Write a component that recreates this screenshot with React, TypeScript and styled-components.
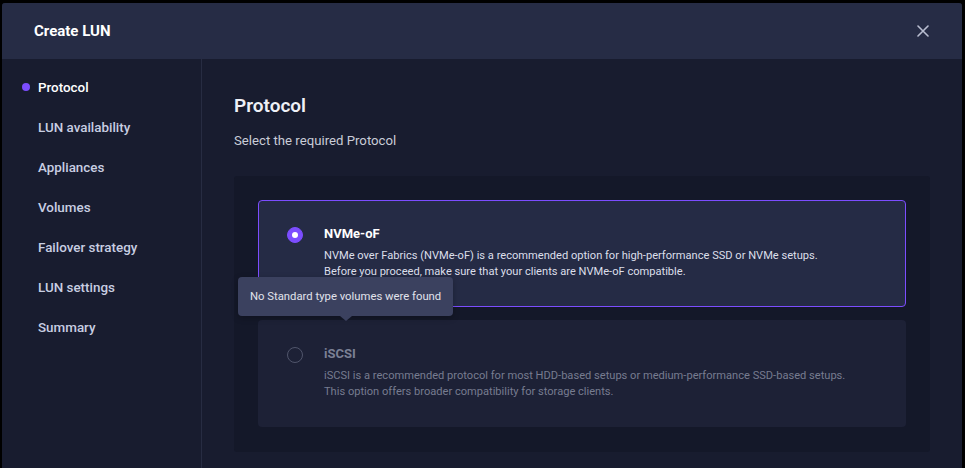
import React from 'react';
import styled, { createGlobalStyle } from 'styled-components';

const GlobalStyle = createGlobalStyle`
  html, body {
    margin: 0;
    padding: 0;
    background: #000;
  }
  body {
    font-family: Roboto, "Noto Sans", sans-serif;
    -webkit-font-smoothing: antialiased;
  }
  * { box-sizing: border-box; }
`;

const steps = [
  'Protocol',
  'LUN availability',
  'Appliances',
  'Volumes',
  'Failover strategy',
  'LUN settings',
  'Summary',
];

const protocols = [
  {
    id: 'nvme',
    title: 'NVMe-oF',
    lines: [
      'NVMe over Fabrics (NVMe-oF) is a recommended option for high-performance SSD or NVMe setups.',
      'Before you proceed, make sure that your clients are NVMe-oF compatible.',
    ],
    selected: true,
    disabled: false,
  },
  {
    id: 'iscsi',
    title: 'iSCSI',
    lines: [
      'iSCSI is a recommended protocol for most HDD-based setups or medium-performance SSD-based setups.',
      'This option offers broader compatibility for storage clients.',
    ],
    selected: false,
    disabled: true,
  },
];

const CreateLunDialog: React.FC = () => {
  return (
    <Dialog>
      <Header>
        <Title>Create LUN</Title>
        <CloseButton aria-label='Close'>
          <svg width='12' height='12' viewBox='0 0 12 12'>
            <path d='M1 1L11 11M11 1L1 11' stroke='#b9bed1' strokeWidth='1.6' strokeLinecap='round' />
          </svg>
        </CloseButton>
      </Header>
      <Body>
        <Sidebar>
          {steps.map((step, index) => (
            <StepItem key={step} active={index === 0}>
              <StepDot active={index === 0} />
              {step}
            </StepItem>
          ))}
        </Sidebar>
        <Main>
          <Heading>Protocol</Heading>
          <SubHeading>Select the required Protocol</SubHeading>
          <Panel>
            {protocols.map((p) => (
              <OptionCard key={p.id} selected={p.selected} disabled={p.disabled}>
                <Radio selected={p.selected} />
                <OptionText>
                  <OptionTitle disabled={p.disabled}>{p.title}</OptionTitle>
                  <OptionDesc disabled={p.disabled}>
                    {p.lines.map((line) => (
                      <div key={line}>{line}</div>
                    ))}
                  </OptionDesc>
                </OptionText>
              </OptionCard>
            ))}
            <Tooltip>No Standard type volumes were found</Tooltip>
          </Panel>
        </Main>
      </Body>
    </Dialog>
  );
};

const Dialog = styled.div`
  margin: 3px 0 0 2px;
  width: 960px;
  height: 465px;
  background: #181c2f;
  display: flex;
  flex-direction: column;
  border-radius: 3px 3px 0 0;
  overflow: hidden;
`;

const Header = styled.div`
  height: 56px;
  flex-shrink: 0;
  background: #262c45;
  display: flex;
  align-items: center;
  justify-content: space-between;
  padding: 0 33px 0 32px;
`;

const Title = styled.div`
  color: #ffffff;
  font-size: 15px;
  font-weight: 700;
`;

const CloseButton = styled.button`
  background: none;
  border: none;
  padding: 0;
  width: 12px;
  height: 12px;
  display: flex;
  cursor: pointer;
`;

const Body = styled.div`
  flex: 1;
  display: flex;
  min-height: 0;
`;

const Sidebar = styled.div`
  width: 200px;
  flex-shrink: 0;
  border-right: 1px solid #272c42;
  padding: 8px 0 0 20px;
  display: flex;
  flex-direction: column;
`;

const StepItem = styled.div<{ active: boolean }>`
  height: 40px;
  display: flex;
  align-items: center;
  gap: 8px;
  font-size: 13.4px;
  font-weight: 500;
  color: ${({ active }) => (active ? '#ffffff' : '#c8cee2')};
`;

const StepDot = styled.span<{ active: boolean }>`
  width: 8px;
  height: 8px;
  border-radius: 50%;
  flex-shrink: 0;
  background: ${({ active }) => (active ? '#7c4dff' : 'transparent')};
`;

const Main = styled.div`
  flex: 1;
  padding: 35px 32px 0 32px;
  display: flex;
  flex-direction: column;
`;

const Heading = styled.h2`
  margin: 0;
  font-size: 19px;
  font-weight: 600;
  line-height: 24px;
  color: #eef0f6;
`;

const SubHeading = styled.p`
  margin: 14px 0 0;
  font-size: 13.2px;
  line-height: 18px;
  color: #c9ccd8;
`;

const Panel = styled.div`
  position: relative;
  margin-top: 26px;
  background: #141829;
  border-radius: 3px;
  padding: 24px;
  display: flex;
  flex-direction: column;
  gap: 13px;
  height: 276px;
`;

const OptionCard = styled.div<{ selected: boolean; disabled: boolean }>`
  height: 107px;
  display: flex;
  align-items: flex-start;
  gap: 21px;
  padding: 24px 20px 0 28px;
  border-radius: 4px;
  border: 1px solid ${({ selected }) => (selected ? '#7c4dff' : 'transparent')};
  background: ${({ selected }) => (selected ? '#252b45' : '#1d2136')};
  cursor: ${({ disabled }) => (disabled ? 'not-allowed' : 'pointer')};
`;

const Radio = styled.span<{ selected: boolean }>`
  width: 16px;
  height: 16px;
  margin-top: 2px;
  border-radius: 50%;
  flex-shrink: 0;
  position: relative;
  background: ${({ selected }) => (selected ? '#7c4dff' : 'transparent')};
  border: 1px solid ${({ selected }) => (selected ? '#7c4dff' : '#50556b')};

  &::after {
    content: '';
    display: ${({ selected }) => (selected ? 'block' : 'none')};
    position: absolute;
    left: 50%;
    top: 50%;
    width: 6px;
    height: 6px;
    border-radius: 50%;
    background: #ffffff;
    transform: translate(-50%, -50%);
  }
`;

const OptionText = styled.div`
  display: flex;
  flex-direction: column;
`;

const OptionTitle = styled.div<{ disabled: boolean }>`
  font-size: 13px;
  font-weight: 700;
  line-height: 18px;
  color: ${({ disabled }) => (disabled ? '#7b8095' : '#ffffff')};
`;

const OptionDesc = styled.div<{ disabled: boolean }>`
  margin-top: 5px;
  font-size: 11.1px;
  line-height: 16px;
  color: ${({ disabled }) => (disabled ? '#777c90' : '#dcdfea')};
`;

const Tooltip = styled.div`
  position: absolute;
  left: 4px;
  top: 101px;
  width: 215px;
  height: 39px;
  padding: 0 12px;
  display: flex;
  align-items: center;
  background: #3b415f;
  border-radius: 4px;
  color: #e1e3ec;
  font-size: 11.3px;
  white-space: nowrap;
  box-shadow: 0 2px 6px rgba(0, 0, 0, 0.25);

  &::after {
    content: '';
    position: absolute;
    left: 102px;
    bottom: -5px;
    border-left: 6px solid transparent;
    border-right: 6px solid transparent;
    border-top: 5px solid #3b415f;
  }
`;

const App: React.FC = () => (
  <>
    <GlobalStyle />
    <CreateLunDialog />
  </>
);

export default App;
